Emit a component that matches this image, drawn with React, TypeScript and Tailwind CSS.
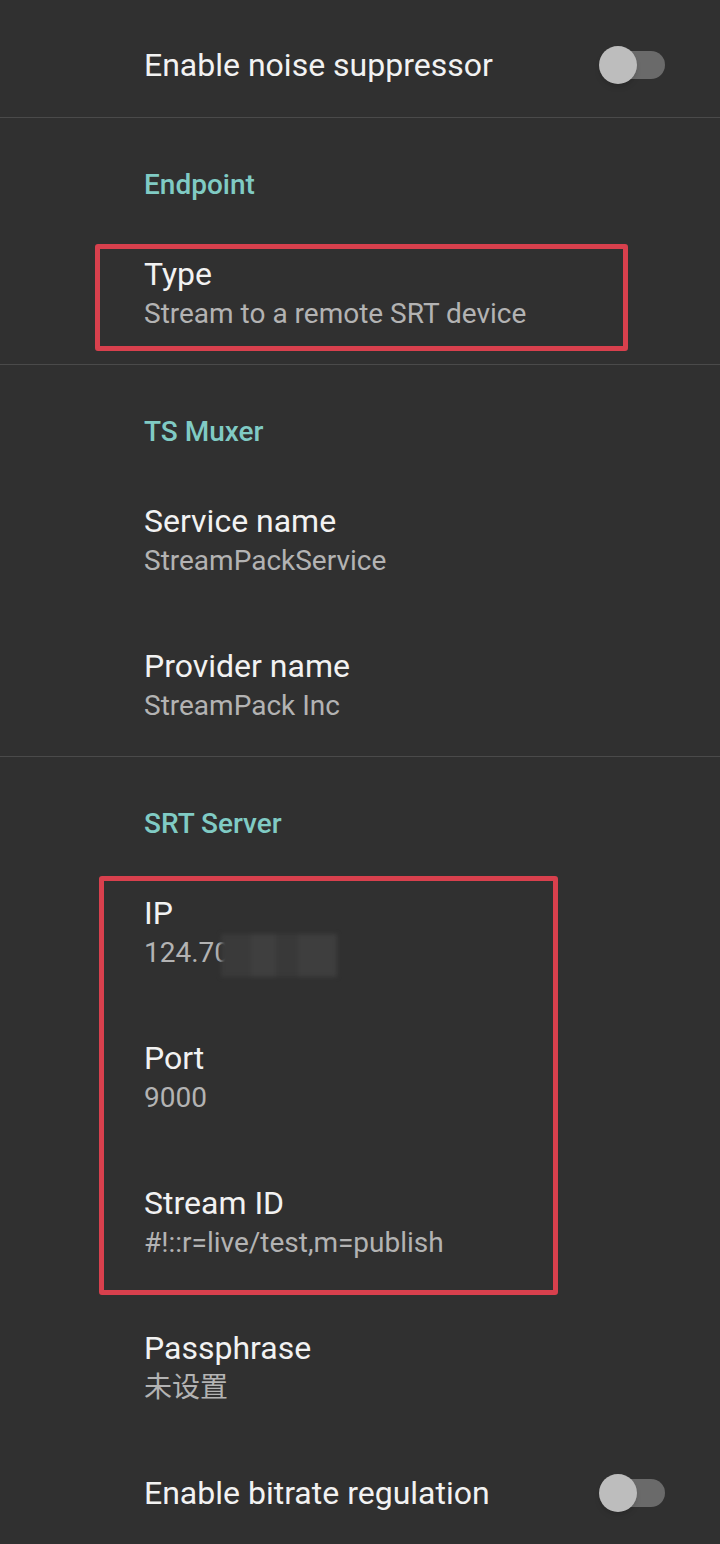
import clsx from "clsx";

const font = { fontFamily: "Roboto, 'Noto Sans CJK SC', sans-serif" };

type ItemProps = {
	title: string;
	summary: string;
	tall?: boolean;
};

const Item = ({ title, summary, tall = true }: ItemProps) => (
	<div className={clsx("flex flex-col pl-[144px] pt-[33px]", tall ? "h-[145px]" : "h-[143px]")}>
		<div className="text-[32px] leading-[40px] text-[#f2f2f2]">{title}</div>
		<div className="text-[28px] leading-[40px] text-[#b3b3b3]">{summary}</div>
	</div>
);

const Header = ({ label }: { label: string }) => (
	<div className="h-[103px] pl-[144px] pt-[52px]">
		<div className="text-[28px] font-medium leading-[30px] text-[#80cbc4]">{label}</div>
	</div>
);

const Divider = () => <div className="h-px bg-[#4a4a4a]" />;

const Switch = () => (
	<div className="relative h-[40px] w-[66px]">
		<div className="absolute top-[6px] right-0 h-[28px] w-[56px] rounded-full bg-[#6a6a6a]" />
		<div className="absolute top-[1px] left-0 h-[38px] w-[38px] rounded-full bg-[#bdbdbd] shadow-md" />
	</div>
);

const SwitchRow = ({ title, className }: { title: string; className: string }) => (
	<div className={clsx("flex items-center justify-between pr-[55px] pl-[144px]", className)}>
		<div className="text-[32px] text-[#f2f2f2]">{title}</div>
		<Switch />
	</div>
);

const Box = ({ className }: { className: string }) => (
	<div className={clsx("pointer-events-none absolute rounded-[3px] border-[5px] border-[#d8404d]", className)} />
);

export default function App() {
	return (
		<div className="relative h-[1544px] w-[720px] overflow-hidden bg-[#303030]" style={font}>
			<SwitchRow title="Enable noise suppressor" className="h-[117px] pt-[13px]" />
			<Divider />
			<Header label="Endpoint" />
			<Item title="Type" summary="Stream to a remote SRT device" tall={false} />
			<Divider />
			<Header label="TS Muxer" />
			<Item title="Service name" summary="StreamPackService" />
			<Item title="Provider name" summary="StreamPack Inc" tall={false} />
			<Divider />
			<Header label="SRT Server" />
			<div className="relative">
				<Item title="IP" summary="124.70" />
				<div className="absolute top-[74px] left-[221px] flex h-[43px] w-[116px] blur-[2px]">
					<div className="w-[30px] bg-[#3a3a3a]" />
					<div className="w-[25px] bg-[#3f3f3f]" />
					<div className="w-[22px] bg-[#393939]" />
					<div className="w-[39px] bg-[#3e3e3e]" />
				</div>
			</div>
			<Item title="Port" summary="9000" />
			<Item title="Stream ID" summary="#!::r=live/test,m=publish" />
			<Item title="Passphrase" summary="未设置" />
			<SwitchRow title="Enable bitrate regulation" className="h-[104px] pt-[2px]" />

			<Box className="top-[244px] left-[95px] h-[107px] w-[533px]" />
			<Box className="top-[876px] left-[99px] h-[419px] w-[459px]" />
		</div>
	);
}
